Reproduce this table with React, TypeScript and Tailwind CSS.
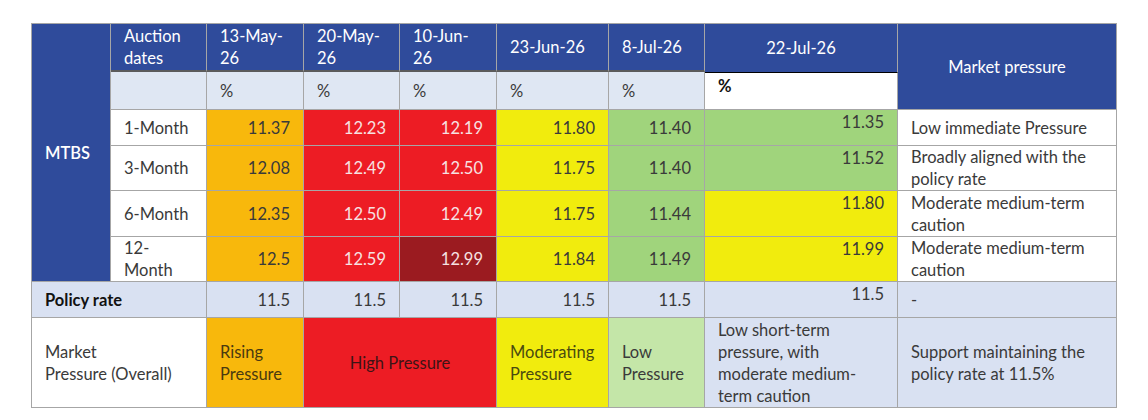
import React from 'react';

const C = {
  blue: 'bg-[#2f4b9b]',
  pct: 'bg-[#dfe7f3]',
  pale: 'bg-[#d9e1f2]',
  orange: 'bg-[#f8b80c]',
  red: 'bg-[#ed1c24]',
  darkRed: 'bg-[#9b1b20]',
  yellow: 'bg-[#f1ec0d]',
  green: 'bg-[#a0d47c]',
  lightGreen: 'bg-[#c4e6a8]',
};

function Cell({ className = '', children }: { className?: string; children?: React.ReactNode }) {
  return <div className={`border-r border-b border-[#a6a6a6] px-[13px] flex ${className}`}>{children}</div>;
}

// numbers: right-aligned, vertically centred
function Num({ bg, v, light = false }: { bg: string; v: string; light?: boolean }) {
  return (
    <Cell className={`${bg} items-center justify-end ${light ? 'text-[#f6e2e2]' : ''}`}>
      {v}
    </Cell>
  );
}

// the 22-Jul column sits at the top of its cell
function Top({ bg, v }: { bg: string; v: string }) {
  return (
    <Cell className={`${bg} items-start justify-end`}>
      <span className="mt-[1px]">{v}</span>
    </Cell>
  );
}

const head = 'text-white items-center border-b-2 border-b-[#5b5b5b]';

const rows = [
  {
    label: '1-Month',
    vals: [['11.37', C.orange], ['12.23', C.red], ['12.19', C.red], ['11.80', C.yellow], ['11.40', C.green]],
    jul: ['11.35', C.green],
    note: <>Low immediate Pressure</>,
  },
  {
    label: '3-Month',
    vals: [['12.08', C.orange], ['12.49', C.red], ['12.50', C.red], ['11.75', C.yellow], ['11.40', C.green]],
    jul: ['11.52', C.green],
    note: <>Broadly aligned with the<br />policy rate</>,
  },
  {
    label: '6-Month',
    vals: [['12.35', C.orange], ['12.50', C.red], ['12.49', C.red], ['11.75', C.yellow], ['11.44', C.green]],
    jul: ['11.80', C.yellow],
    note: <>Moderate medium-term<br />caution</>,
  },
  {
    label: <>12-<br />Month</>,
    vals: [['12.5', C.orange], ['12.59', C.red], ['12.99', C.darkRed], ['11.84', C.yellow], ['11.49', C.green]],
    jul: ['11.99', C.yellow],
    note: <>Moderate medium-term<br />caution</>,
  },
];

export default function App() {
  return (
    <div className="w-[1148px] h-[420px] bg-white pt-[23px] font-['Lato',sans-serif] text-[16.5px] leading-[22px] text-[#3a3a3a]">
      <div className="mx-auto w-[1086px] grid grid-cols-[79px_96px_97px_96px_97px_112px_96px_193px_219px] grid-rows-[48px_38px_36px_45px_46px_45px_36px_90px] border-l border-t border-[#a6a6a6]">
        {/* header */}
        <Cell className={`${C.blue} row-span-6 items-center text-white font-semibold`}>MTBS</Cell>
        <Cell className={`${C.blue} ${head}`}>Auction<br />dates</Cell>
        <Cell className={`${C.blue} ${head}`}>13-May-<br />26</Cell>
        <Cell className={`${C.blue} ${head}`}>20-May-<br />26</Cell>
        <Cell className={`${C.blue} ${head}`}>10-Jun-<br />26</Cell>
        <Cell className={`${C.blue} ${head}`}>23-Jun-26</Cell>
        <Cell className={`${C.blue} ${head}`}>8-Jul-26</Cell>
        <Cell className={`${C.blue} text-white items-center justify-center border-b-0`}>22-Jul-26</Cell>
        <Cell className={`${C.blue} row-span-2 text-white items-center justify-center`}>Market pressure</Cell>

        {/* unit row */}
        <Cell className={C.pct} />
        {[0, 1, 2, 3, 4].map(i => (
          <Cell key={i} className={`${C.pct} items-center`}>%</Cell>
        ))}
        <Cell className="bg-white border-t border-t-black items-start font-bold text-[#111]">
          <span className="mt-[2px]">%</span>
        </Cell>

        {/* MTBS tenors */}
        {rows.map((r, i) => (
          <React.Fragment key={i}>
            <Cell className="bg-white items-center">{r.label}</Cell>
            {r.vals.map(([v, bg], j) => (
              <Num key={j} v={v} bg={bg} light={bg === C.red || bg === C.darkRed} />
            ))}
            <Top v={r.jul[0]} bg={r.jul[1]} />
            <Cell className="bg-white items-center">
              <span>{r.note}</span>
            </Cell>
          </React.Fragment>
        ))}

        {/* policy rate */}
        <Cell className={`${C.pale} col-span-2 items-center font-bold text-[#111]`}>Policy rate</Cell>
        {[0, 1, 2, 3, 4].map(i => (
          <Num key={i} v="11.5" bg={C.pale} />
        ))}
        <Top v="11.5" bg={C.pale} />
        <Cell className={`${C.pale} items-center`}>-</Cell>

        {/* overall */}
        <Cell className="bg-white col-span-2 items-center">
          <span>Market<br />Pressure (Overall)</span>
        </Cell>
        <Cell className={`${C.orange} items-center text-[#4a3a10]`}>
          <span>Rising<br />Pressure</span>
        </Cell>
        <Cell className={`${C.red} col-span-2 items-center justify-center text-[#3d1416]`}>High Pressure</Cell>
        <Cell className={`${C.yellow} items-center text-[#4a4a10]`}>
          <span>Moderating<br />Pressure</span>
        </Cell>
        <Cell className={`${C.lightGreen} items-center`}>
          <span>Low<br />Pressure</span>
        </Cell>
        <Cell className={`${C.pale} items-center`}>
          <span>Low short-term<br />pressure, with<br />moderate medium-<br />term caution</span>
        </Cell>
        <Cell className={`${C.pale} items-center`}>
          <span>Support maintaining the<br />policy rate at 11.5%</span>
        </Cell>
      </div>
    </div>
  );
}
